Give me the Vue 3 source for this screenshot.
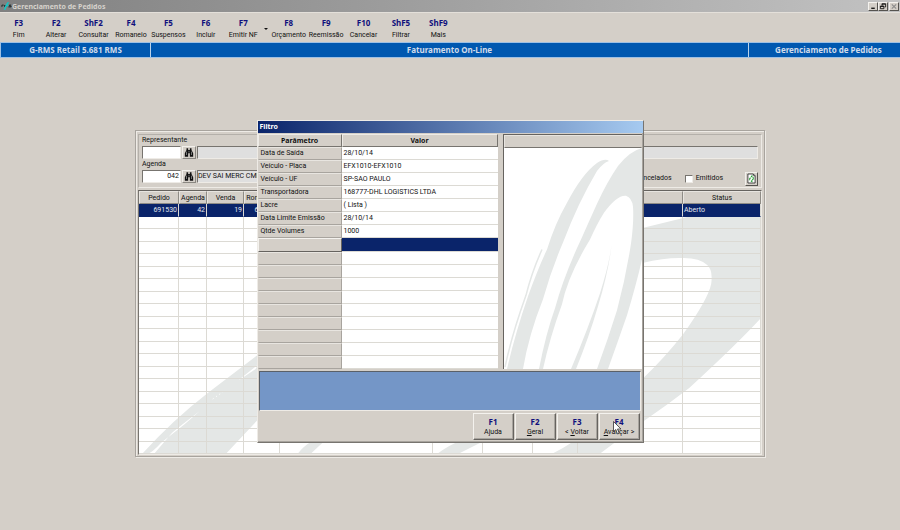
<script setup>
import { ref } from 'vue'

const mainKeys = [
  { key: 'F3', label: 'Fim' },
  { key: 'F2', label: 'Alterar' },
  { key: 'ShF2', label: 'Consultar' },
  { key: 'F4', label: 'Romaneio' },
  { key: 'F5', label: 'Suspensos' },
  { key: 'F6', label: 'Incluir' },
  { key: 'F7', label: 'Emitir NF' },
]
const extraKeys = [
  { key: 'F8', label: 'Orçamento' },
  { key: 'F9', label: 'Reemissão' },
  { key: 'F10', label: 'Cancelar' },
  { key: 'ShF5', label: 'Filtrar' },
  { key: 'ShF9', label: 'Mais' },
]

const orderColumns = ['Pedido', 'Agenda', 'Venda', 'Romaneio', '', '', '', '', '', 'Status']
const orderRow = ['691530', '42', '19', '691530', '', '', '', '', '', 'Aberto']
const emptyOrders = 19

const params = [
  ['Data de Saída', '28/10/14'],
  ['Veículo - Placa', 'EFX1010-EFX1010'],
  ['Veículo - UF', 'SP-SAO PAULO'],
  ['Transportadora', '168777-DHL LOGISTICS LTDA'],
  ['Lacre', '( Lista )'],
  ['Data Limite Emissão', '28/10/14'],
  ['Qtde Volumes', '1000'],
]
const emptyParams = 9

const actions = [
  { key: 'F1', before: 'A', hot: 'j', after: 'uda' },
  { key: 'F2', before: '', hot: 'G', after: 'eral' },
  { key: 'F3', before: '< ', hot: 'V', after: 'oltar' },
  { key: 'F4', before: '', hot: 'A', after: 'vançar >' },
]

const representante = ref('')
const representanteNome = ref('')
const agenda = ref('042')
const agendaNome = ref('DEV SAI MERC CMF')
const cancelados = ref(false)
const emitidos = ref(false)
</script>

<template>
  <div class="app">
    <header class="titlebar">
      <svg class="logo" viewBox="0 0 12 10" aria-hidden="true">
        <path d="M1 6V4h2M4 6V4l1 1 1-1v2M11 4H9v1h2v1H8" fill="none" stroke="#1c2626" stroke-width="1" />
        <path d="M3 9L5 4 7 1h2L7 4h2L6 6 5 9z" fill="#18c4c4" />
      </svg>
      <h1>Gerenciamento de Pedidos</h1>
      <div class="win-buttons">
        <button type="button" aria-label="Minimizar">
          <svg viewBox="0 0 8 8"><path d="M2 6h4" stroke="#000" stroke-width="1.4" /></svg>
        </button>
        <button type="button" aria-label="Restaurar">
          <svg viewBox="0 0 8 8">
            <path d="M3 3V1h4v3.500H6M2.500 1.200h4.500" fill="none" stroke="#111" stroke-width="1" />
            <path d="M1 3.500h4v3H1zM1 4h4" fill="none" stroke="#111" stroke-width="1" />
          </svg>
        </button>
        <button type="button" class="close" aria-label="Fechar">
          <svg viewBox="0 0 8 8"><path d="M1.500 1.500l5 5M6.500 1.500l-5 5" stroke="#8a8a8a" stroke-width="1.200" /></svg>
        </button>
      </div>
    </header>

    <nav class="toolbar">
      <div class="key-group main-keys">
        <button v-for="k in mainKeys" :key="k.key" type="button">
          <b>{{ k.key }}</b><span>{{ k.label }}</span>
        </button>
      </div>
      <svg class="caret" viewBox="0 0 8 4" aria-hidden="true"><path d="M2 1h4L4 3z" fill="#111" /></svg>
      <div class="key-group extra-keys">
        <button v-for="k in extraKeys" :key="k.key" type="button">
          <b>{{ k.key }}</b><span>{{ k.label }}</span>
        </button>
      </div>
    </nav>

    <div class="banner">
      <span>G-RMS Retail 5.681 RMS</span>
      <span>Faturamento On-Line</span>
      <span>Gerenciamento de Pedidos</span>
    </div>

    <main class="stage">
      <section class="frame">
        <form class="search" @submit.prevent>
          <label for="rep">Representante</label>
          <div class="line">
            <input id="rep" v-model="representante" class="code" type="text" />
            <button type="button" class="find" aria-label="Buscar representante">
              <svg viewBox="0 0 12 10">
                <path d="M3 0h2v2h2V0h2v2l2 4v4H7V6H5v4H1V6l2-4z" fill="#111" />
                <path d="M3 4v4M9 4v4M6 3v2" stroke="#bbb" stroke-width=".7" />
              </svg>
            </button>
            <input v-model="representanteNome" class="name" type="text" readonly aria-label="Nome do representante" />
          </div>
          <label for="agenda">Agenda</label>
          <div class="line">
            <input id="agenda" v-model="agenda" class="code" type="text" />
            <button type="button" class="find" aria-label="Buscar agenda">
              <svg viewBox="0 0 12 10">
                <path d="M3 0h2v2h2V0h2v2l2 4v4H7V6H5v4H1V6l2-4z" fill="#111" />
                <path d="M3 4v4M9 4v4M6 3v2" stroke="#bbb" stroke-width=".7" />
              </svg>
            </button>
            <input v-model="agendaNome" class="name" type="text" readonly aria-label="Nome da agenda" />
            <label class="check"><input v-model="cancelados" type="checkbox" />Cancelados</label>
            <label class="check"><input v-model="emitidos" type="checkbox" />Emitidos</label>
            <button type="button" class="refresh" aria-label="Atualizar">
              <svg viewBox="0 0 10 11">
                <path d="M1 .5h6l2 2v8H1z" fill="#fff" stroke="#222" stroke-width=".9" />
                <path d="M7 .5v2h2" fill="none" stroke="#222" stroke-width=".7" />
                <path d="M3 7.500V5h1.500M7 4v2.500H5.500" fill="none" stroke="#1b9a2a" stroke-width="1" />
                <path d="M4 3l2-1.500v3.500zM6 6.500v3.500L4 8.500z" fill="#1b9a2a" />
              </svg>
            </button>
          </div>
        </form>

        <div class="orders">
          <svg class="watermark" viewBox="138 204 624 250" preserveAspectRatio="none" aria-hidden="true">
            <g fill="#e4e7e6">
              <path d="M141 454Q172 420 207 393L257 355Q400 260 643 228Q672 221 692 216L762 204V318Q738 344 690 388Q668 405 643 422L600 454H552Q600 430 643 379Q666 357 684 334Q709 299 712 284Q714 270 708 265Q700 257 680 258Q664 258 643 263Q430 300 257 420L225 454z" />
              <path d="M297 454Q303 446 312 441L324 441 310 454zM437 454Q449 445 460 441H484L458 454z" />
            </g>
            <path d="M146 454Q151 453 160 443L184 424 199 411Q178 427 171 433L153 454zM238 380L257 365 255 369 240 379z" fill="#fff" />
            <path d="M212 399l10-7" stroke="#fff" stroke-dasharray="1 3" />
          </svg>
          <table>
            <colgroup>
              <col class="w40" /><col class="w28" /><col class="w37" /><col class="w36" /><col />
              <col class="w50" /><col class="w50" /><col class="w45" /><col class="w105" /><col class="w78" />
            </colgroup>
            <thead>
              <tr><th v-for="(c, i) in orderColumns" :key="i" scope="col">{{ c }}</th></tr>
            </thead>
            <tbody>
              <tr class="selected"><td v-for="(c, i) in orderRow" :key="i">{{ c }}</td></tr>
              <tr v-for="n in emptyOrders" :key="n"><td v-for="(c, i) in orderRow" :key="i"></td></tr>
            </tbody>
          </table>
        </div>
      </section>

      <section class="dialog" role="dialog" aria-labelledby="filtro-title">
        <h2 id="filtro-title">Filtro</h2>
        <div class="panes">
          <table class="params">
            <colgroup><col class="w84" /><col /></colgroup>
            <thead>
              <tr><th scope="col">Parâmetro</th><th scope="col">Valor</th></tr>
            </thead>
            <tbody>
              <tr v-for="p in params" :key="p[0]"><th scope="row">{{ p[0] }}</th><td>{{ p[1] }}</td></tr>
              <tr class="current"><th></th><td></td></tr>
              <tr v-for="n in emptyParams" :key="n"><th></th><td></td></tr>
            </tbody>
          </table>
          <div class="options">
            <div class="options-head"></div>
            <svg viewBox="504 148 138 222" preserveAspectRatio="none" aria-hidden="true">
              <g fill="#e4e7e6">
                <path d="M609 161Q605 158 597 163Q582 174 567 203Q555 224 547 250Q538 269 528 297Q515 335 507 370H523Q529 335 543 300Q551 271 563 243Q578 203 597 171Q603 163 609 161z" />
                <path d="M642 148Q630 151 618 166Q607 182 597 204Q588 224 581 240Q564 276 555 309Q546 334 539 370H543Q550 338 562 305Q568 276 590 240Q597 224 604 213Q617 195 626 196Q632 198 633 207Q634 222 631 244Q626 277 617 311Q608 340 597 370H608Q618 342 627 316Q636 286 642 260z" />
                <path d="M612 242Q610 262 600 294Q588 330 571 370H576Q589 338 598 307Q609 271 612 242z" />
              </g>
              <path d="M542 250Q532 272 526 296M526 296Q512 335 505 368" fill="none" stroke="#e4e7e6" stroke-width="1.500" />
            </svg>
          </div>
        </div>
        <div class="message"></div>
        <footer>
          <button v-for="a in actions" :key="a.key" type="button">
            <b>{{ a.key }}</b><span>{{ a.before }}<u>{{ a.hot }}</u>{{ a.after }}</span>
          </button>
          <svg class="cursor" viewBox="0 0 9 14" aria-hidden="true">
            <path d="M.5 .5v10l2.300-2 1.700 4.500 1.700-.7-1.700-4.300h3.500z" fill="#fff" stroke="#333" stroke-width=".8" />
          </svg>
        </footer>
      </section>
    </main>
  </div>
</template>

<style>
body {
  margin: 0;
  background: #d4cfc8;
}
</style>

<style scoped>
* {
  box-sizing: border-box;
}
.app {
  min-height: 100vh;
  display: flex;
  flex-direction: column;
  background: #d4cfc8;
  color: #111;
  font: 7px/9px Roboto, "Liberation Sans", sans-serif;
  cursor: default;
}
button,
input {
  margin: 0;
  padding: 0;
  border: 0;
  border-radius: 0;
  font: inherit;
  color: inherit;
  background: none;
  appearance: none;
}
h1,
h2 {
  margin: 0;
  font: bold 7px/11px "Noto Sans", sans-serif;
}
svg {
  display: block;
}

.titlebar {
  display: flex;
  align-items: center;
  height: 12px;
  padding: 0 1px;
  background: linear-gradient(90deg, #808080, #c2c2c2);
}
.titlebar h1 {
  flex: 1;
  color: #d6d2cc;
}
.logo {
  width: 11px;
  height: 10px;
}
.win-buttons {
  display: flex;
}
.win-buttons button {
  width: 10px;
  height: 9px;
  background: #d4cfc8;
  border: 1px solid;
  border-color: #f4f2ee #55534f #55534f #f4f2ee;
}
.win-buttons .close {
  margin-left: 1px;
}
.win-buttons svg {
  width: 8px;
  height: 7px;
}

.toolbar {
  display: flex;
  align-items: center;
  height: 30px;
  padding-top: 2px;
  border-top: 1px solid #e4e0da;
}
.key-group {
  display: flex;
}
.main-keys {
  width: 262px;
}
.extra-keys {
  width: 187px;
}
.key-group button {
  flex: 1 1 0;
  min-width: 0;
  display: flex;
  flex-direction: column;
  align-items: center;
  gap: 3px;
  white-space: nowrap;
}
.toolbar b,
footer b {
  font: bold 8px/10px "Noto Sans", sans-serif;
  color: #10107c;
}
.caret {
  width: 8px;
  height: 4px;
}

.banner {
  display: grid;
  grid-template-columns: 149px 1fr 152px;
  height: 16px;
  border: 1px solid #9dc0e4;
  border-width: 1px 0 1px 1px;
  background: #0058b0;
  color: #d2dcea;
  font: bold 8px/14px "Noto Sans", sans-serif;
  text-align: center;
}
.banner span + span {
  border-left: 1px solid #b9d2ea;
}
.banner span:last-child {
  padding-left: 8px;
}

.stage {
  position: relative;
  flex: 1;
  padding: 72px 15%;
}
.frame {
  padding: 3px 2px 1px;
  border: 1px solid #a8a49e;
  box-shadow: inset 1px 1px #eeebe6, 1px 1px #eeebe6;
}
.search {
  display: grid;
  padding: 1px 3px 4px;
  border: 1px solid #b4b0aa;
  border-color: #b4b0aa #eeebe6 #eeebe6 #b4b0aa;
}
.line + label {
  margin-top: 1px;
}
.line {
  display: flex;
  align-items: center;
  gap: 1px;
  height: 14px;
}
.line input[type="text"] {
  height: 13px;
  border: 1px solid;
  border-color: #77746f #eeebe6 #eeebe6 #77746f;
}
.line .code {
  width: 39px;
  padding-right: 1px;
  background: #fff;
  text-align: right;
}
.line .name {
  flex: 1;
  min-width: 0;
  background: #dfdfdf;
}
.find,
.refresh {
  display: grid;
  place-items: center;
  width: 14px;
  height: 13px;
  border: 1px solid;
  border-color: #f2f0ec #8a8781 #8a8781 #f2f0ec;
}
.find svg {
  width: 10px;
  height: 9px;
}
.check,
.refresh {
  margin-top: 5px;
}
.refresh {
  width: 13px;
  height: 14px;
  margin-left: 21px;
  border-color: #f2f0ec #55534f #55534f #f2f0ec;
}
.refresh svg {
  width: 9px;
  height: 11px;
}
.check {
  display: flex;
  align-items: center;
  gap: 3px;
  margin-left: 12px;
}
.check input {
  width: 8px;
  height: 8px;
  background: #fff;
  border: 1px solid;
  border-color: #77746f #eeebe6 #eeebe6 #77746f;
}
.check input:checked {
  background: #0a246a;
}

.orders {
  position: relative;
  margin-top: 2px;
  background: #fff;
  border: 1px solid;
  border-color: #66635f #eeebe6 #eeebe6 #77746f;
}
.watermark {
  position: absolute;
  top: 13px;
  left: 0;
  width: 100%;
  height: calc(100% - 13px);
}
table {
  width: 100%;
  table-layout: fixed;
  border-collapse: separate;
  border-spacing: 0;
}
th,
td {
  padding: 0 2px;
  overflow: hidden;
  white-space: nowrap;
  line-height: 9px;
  font-weight: normal;
  text-align: left;
}
.orders table {
  position: relative;
}
.orders tr {
  height: 13px;
}
.orders tbody tr:nth-child(even) {
  height: 12px;
}
.orders th {
  padding: 1px 0 0;
  text-align: center;
  background: #d4cfc8;
  border: 1px solid;
  border-color: #e8e5e0 #8f8c86 #8f8c86 #e8e5e0;
}
.orders td {
  padding: 1px 1px 0;
  text-align: right;
  border-right: 1px solid #dcdad4;
  border-bottom: 1px solid #dcdad4;
}
.orders td:last-child {
  text-align: left;
}
.orders .selected td {
  background: #0a246a;
  border-bottom-color: #0a246a;
  color: #e6e8ee;
}
.w28 { width: 28px; }
.w36 { width: 36px; }
.w37 { width: 37px; }
.w40 { width: 40px; }
.w45 { width: 45px; }
.w50 { width: 50px; }
.w78 { width: 78px; }
.w84 { width: 84px; }
.w105 { width: 105px; }

.dialog {
  position: absolute;
  top: 62px;
  left: 0;
  right: 0;
  width: 387px;
  margin: 0 auto;
  background: #d4cfc8;
  border: 1px solid;
  border-color: #eeebe6 #77746f #77746f #eeebe6;
  box-shadow: inset -1px -1px #a8a49e;
}
.dialog h2 {
  height: 12px;
  padding-left: 2px;
  background: linear-gradient(90deg, #0a246a, #a6caf0);
  color: #fff;
}
.panes {
  display: grid;
  grid-template-columns: 240px 1fr;
  gap: 5px;
  padding: 1px 1px 0 0;
}
.params tr {
  height: 13px;
}
.params .current {
  height: 14px;
}
.params th {
  background: #d4cfc8;
  border: 1px solid;
  border-color: #e8e5e0 #a8a49e #a8a49e #d4cfc8;
}
.params thead th {
  font: bold 7px/9px "Noto Sans", sans-serif;
  text-align: center;
  border-color: #eeebe6 #77746f #77746f #eeebe6;
}
.params td {
  background: #fff;
  border-bottom: 1px solid #dcdad4;
}
.params .current th {
  border-color: #f4f2ee #66635f #66635f #f4f2ee;
}
.params .current td {
  background: #0a246a;
}
.options {
  display: flex;
  flex-direction: column;
  background: #fff;
  border-left: 1px solid #66635f;
  border-top: 1px solid #66635f;
}
.options-head {
  height: 13px;
  background: #d4cfc8;
  border: 1px solid;
  border-color: #e8e5e0 #d4cfc8 #77746f #e8e5e0;
}
.options svg {
  flex: 1 1 0;
  min-height: 0;
  width: 100%;
}
.message {
  height: 40px;
  margin: 2px 2px 0 1px;
  background: #7496c7;
  border: 1px solid;
  border-color: #5a6068 #eeebe6 #eeebe6 #5a6068;
}
footer {
  position: relative;
  display: flex;
  justify-content: flex-end;
  gap: 1px;
  padding: 2px 3px 2px 0;
}
footer button {
  display: flex;
  flex-direction: column;
  align-items: center;
  justify-content: center;
  gap: 1px;
  width: 41px;
  height: 27px;
  border: 1px solid;
  border-color: #f4f2ee #66635f #66635f #f4f2ee;
  box-shadow: inset -1px -1px #a8a49e;
}
footer u {
  text-underline-offset: 1px;
}
.cursor {
  position: absolute;
  right: 21px;
  top: 10px;
  width: 9px;
  height: 14px;
}
</style>
